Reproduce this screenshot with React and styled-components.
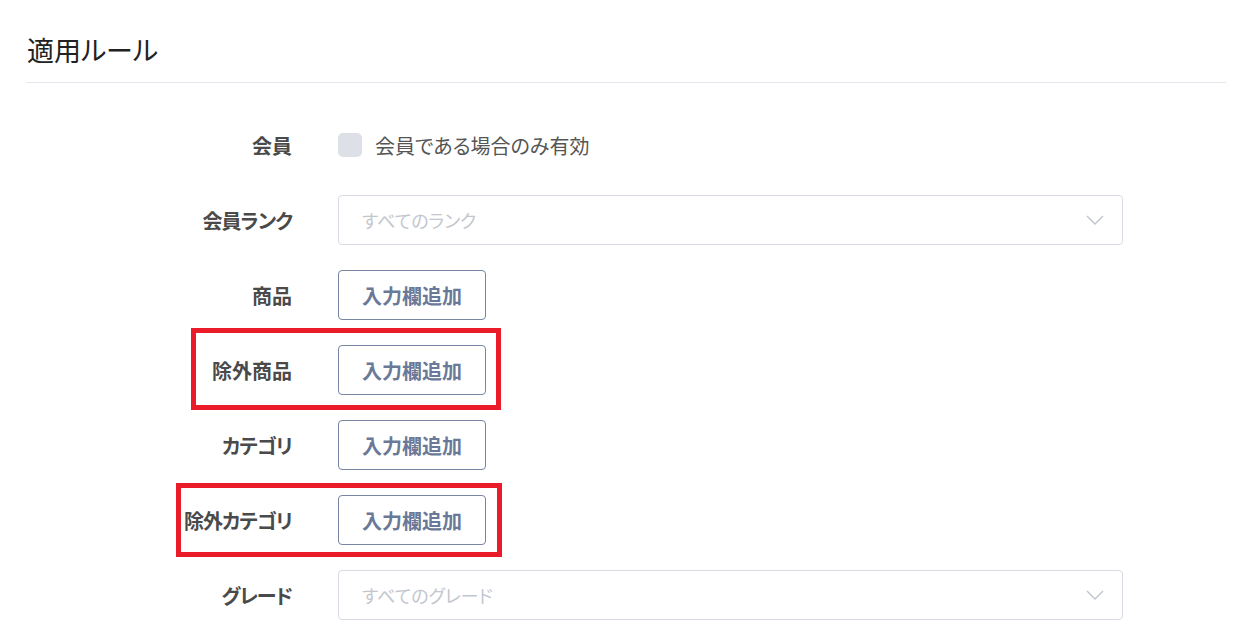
import React from 'react'
import styled, { createGlobalStyle } from 'styled-components'

const GlobalStyle = createGlobalStyle`
  body {
    margin: 0;
    background: #fff;
    font-family: "Noto Sans CJK JP", "Noto Sans", sans-serif;
    font-feature-settings: "palt";
  }
`

const Page = styled.div`
  padding: 0 20px 0 26px;
`

const Header = styled.div`
  padding: 30px 0 12px 1px;
  border-bottom: 1px solid #e6e6ee;
  font-size: 27px;
  line-height: 40px;
  color: #222;
`

const Form = styled.div`
  display: flex;
  flex-direction: column;
  gap: 25px;
  margin-top: 37px;
`

const Row = styled.div`
  position: relative;
  display: grid;
  grid-template-columns: 266px 785px;
  column-gap: 46px;
  align-items: center;
  height: 50px;
`

const Label = styled.div`
  text-align: right;
  font-size: 20px;
  font-weight: 700;
  color: #4a4a4a;
  letter-spacing: ${p => (p.$tight ? '-1px' : '0')};
`

const CheckLine = styled.label`
  display: flex;
  align-items: center;
  gap: 13px;
  font-size: 20px;
  color: #555;
`

const Box = styled.span`
  width: 24px;
  height: 24px;
  border-radius: 5px;
  background: #dde0e6;
`

const Select = styled.div`
  height: 50px;
  box-sizing: border-box;
  border: 1px solid #d8dbe2;
  border-radius: 4px;
  display: flex;
  align-items: center;
  justify-content: space-between;
  padding: 0 18px 0 23px;
  font-size: 18px;
  color: #c3c6ce;
`

const Chevron = styled.svg`
  width: 18px;
  height: 10px;
`

const AddButton = styled.button`
  width: 148px;
  height: 50px;
  border: 1px solid #7786a3;
  border-radius: 4px;
  background: #fff;
  font-family: inherit;
  font-feature-settings: "palt";
  font-size: 20px;
  font-weight: 700;
  color: #6a7998;
  padding: 0;
`

const Highlight = styled.div`
  position: absolute;
  left: ${p => p.$left}px;
  top: ${p => p.$top}px;
  width: ${p => p.$width}px;
  height: ${p => p.$height}px;
  box-sizing: border-box;
  border: 5px solid #ea1c2a;
  pointer-events: none;
`

const Dropdown = ({ placeholder }) => (
  <Select>
    {placeholder}
    <Chevron viewBox="0 0 18 10" fill="none">
      <path d="M1 1l8 8 8-8" stroke="#c0c4cc" strokeWidth="1.4" />
    </Chevron>
  </Select>
)

const fields = [
  { label: '商品' },
  { label: '除外商品', mark: { left: 165, top: -17, width: 310, height: 82 } },
  { label: 'カテゴリ', tight: true },
  { label: '除外カテゴリ', tight: true, mark: { left: 150, top: -12, width: 326, height: 74 } },
]

const App = () => (
  <Page>
    <GlobalStyle />
    <Header>適用ルール</Header>
    <Form>
      <Row>
        <Label>会員</Label>
        <CheckLine>
          <Box />
          会員である場合のみ有効
        </CheckLine>
      </Row>
      <Row>
        <Label $tight>会員ランク</Label>
        <Dropdown placeholder="すべてのランク" />
      </Row>
      {fields.map(f => (
        <Row key={f.label}>
          <Label $tight={f.tight}>{f.label}</Label>
          <div>
            <AddButton>入力欄追加</AddButton>
          </div>
          {f.mark && (
            <Highlight $left={f.mark.left} $top={f.mark.top} $width={f.mark.width} $height={f.mark.height} />
          )}
        </Row>
      ))}
      <Row>
        <Label $tight>グレード</Label>
        <Dropdown placeholder="すべてのグレード" />
      </Row>
    </Form>
  </Page>
)

export default App
